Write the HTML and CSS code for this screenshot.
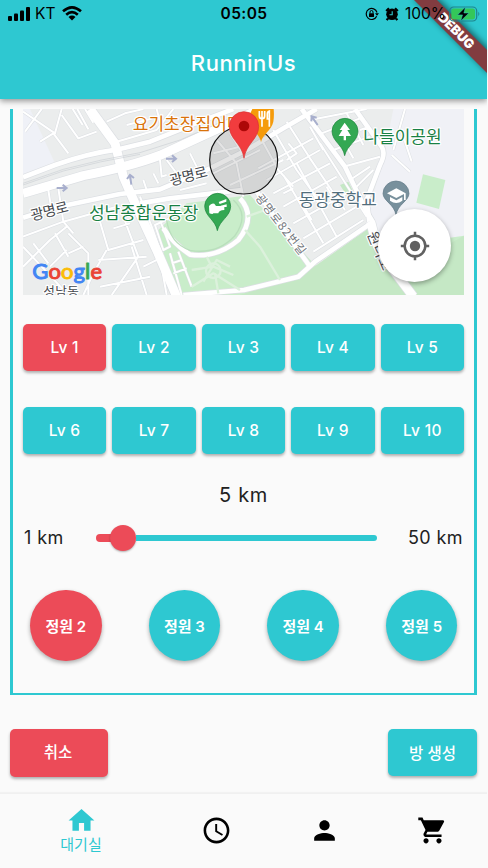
FILE: index.html
```html
<!DOCTYPE html>
<html lang="ko">
<head>
<meta charset="utf-8">
<title>RunninUs</title>
<link rel="stylesheet" href="styles.css">
</head>
<body>
<div class="app">
  <header class="appbar">
    <svg class="debug" viewBox="0 0 88 88">
      <defs><filter id="soft" x="-30%" y="-30%" width="160%" height="160%"><feGaussianBlur stdDeviation="3"/></filter></defs>
      <path d="M13-2L90 75V50L38-2z" opacity=".5" filter="url(#soft)"/>
      <path d="M12-2L90 76V53L35-2z" fill="#823c40"/>
      <text x="56.500" y="35.500" transform="rotate(45 56.500 30.700)" text-anchor="middle" textLength="45">DEBUG</text>
    </svg>
    <div class="status">
      <div class="status-left">
        <svg class="signal" viewBox="0 0 22 14"><rect x="0" y="9" width="4" height="5" rx="1"/><rect x="6" y="6.500" width="4" height="7.500" rx="1"/><rect x="12" y="3.500" width="4" height="10.500" rx="1"/><rect x="18" y="0" width="4" height="14" rx="1"/></svg>
        <span class="carrier">KT</span>
        <svg class="wifi" viewBox="0 0 20 15"><g fill="none" stroke="#000" stroke-width="2.600"><path d="M1 5.300Q10-2.600 19 5.300"/><path d="M4.200 8.700Q10 3.500 15.800 8.700"/></g><path d="M6.500 10.900Q10 8 13.500 10.900L10 14.500z"/></svg>
      </div>
      <span class="time">05:05</span>
      <div class="status-right">
        <svg class="lock" viewBox="0 0 14 14"><path d="M11.700 9.300A5.500 5.500 0 1 1 12 5.500" fill="none" stroke="#000" stroke-width="1.200"/><path d="M10 6.200h4l-2 2.600z"/><rect x="4" y="6.200" width="5" height="3.700" rx=".5"/><path d="M5 6.500V5a1.500 1.500 0 0 1 3 0v1.500" fill="none" stroke="#000"/></svg>
        <svg class="alarm" viewBox="0 0 14 14"><circle cx="7" cy="7.300" r="5.800"/><path d="M1.200 4L4 1.200M12.800 4L10 1.200M3 11.500l-1.300 1.700M11 11.500l1.300 1.700" stroke="#000" stroke-width="2.200"/><path d="M7.200 4.200v3.500H4.500" fill="none" stroke="#2ec8d1" stroke-width="1.100"/></svg>
        <span class="percent">100%</span>
        <svg class="battery" viewBox="0 0 31 16"><rect x=".7" y="1" width="27" height="14" rx="4" fill="none" stroke="#1f858b" stroke-width="1.200"/><rect x="2.300" y="2.600" width="23.800" height="10.800" rx="2.600" fill="#34c759"/><path d="M29.300 5.800q2 2.200 0 4.400z" fill="#1f858b"/><path d="M16.500 1L8.500 8.900h5L11.700 15 19.900 7h-5z" stroke="#2ec8d1" stroke-width=".5"/></svg>
      </div>
    </div>
    <h1 class="title">RunninUs</h1>
  </header>

  <main class="content">
    <section class="panel">
      <div class="map">
        <svg class="map-art" viewBox="69 27 1323 558" preserveAspectRatio="none">
          <defs>
            <g id="minor">
              <path d="M69 35L165 100L185 27M75 95L125 27M185 45L235 115L290 95M218 27L248 75M232 27L265 88M255 27L280 68M120 125L160 100L205 160M320 65L375 40L430 27M350 125L470 90L520 27M380 75L460 55M470 27L485 85"/>
              <path d="M69 410L190 365L350 320M145 270L155 335M175 265L190 365L220 400M69 500L150 420L200 380M69 440L130 505L200 580M100 430L145 490M165 400L205 470M205 400L265 460L265 585M200 450L150 500M300 365L325 450L430 420M320 450L280 520L250 585M370 350L415 470L335 585M295 480L440 470M300 560L450 530M395 440L440 585M340 385L390 370M205 460L250 440M430 500L480 475L500 585"/>
              <path d="M420 290L455 380L490 480M480 360L510 440L490 450L465 375L520 350M510 460L545 585M535 455L575 560M515 490L545 480M520 520L560 505M430 240L440 270M460 220L475 250M480 180L485 230L500 225M500 180L530 220M570 160L600 220M540 270L620 250"/>
              <path d="M650 120L710 190L730 290M690 100L735 170M640 160L720 140M640 220L780 150M690 255L850 180M780 110L835 210L880 260M820 90L890 210L970 320M860 65L930 175L1035 330M775 205L940 115M800 240L960 150M820 280L990 190M850 320L1010 230M880 370L1040 280M910 415L1070 320M940 455L1090 360M850 225L970 430M890 190L1010 410M960 130L1100 350M865 130L890 160L860 180M930 80L970 150M850 280L880 265M900 300L935 360M980 260L1015 320"/>
              <path d="M930 60L1100 27M965 100L1080 55M1000 150L1110 110M1030 200L1140 170M1070 260L1120 210M1000 70L1060 175M1040 40L1090 135M1080 90L1110 80M1180 150L1215 27M1050 240L1110 200M1175 165L1230 215M1205 95L1235 185"/>
            </g>
            <g id="medium">
              <path d="M69 232L165 195Q265 160 350 149L450 125L600 65L700 27"/>
              <path d="M69 353L170 322L360 282L480 268L630 205L740 150L850 85L950 27"/>
              <path d="M420 310L510 295L640 280L725 270"/>
              <path d="M770 275L930 500"/>
              <path d="M905 27L945 80L1035 200L1100 335L1118 365"/>
              <path d="M1065 27L1145 140Q1158 160 1140 195L1100 300L1108 365"/>
              <path d="M1120 365L945 485L895 530L732 570L550 585"/>
              <path d="M490 385Q520 430 570 464Q650 475 715 420Q770 350 720 295"/>
            </g>
            <g id="major">
              <path d="M69 280L250 227Q390 200 480 166L700 65L780 27"/>
              <path d="M270 27L345 130L370 230L405 310L470 450L530 590"/>
              <path d="M1112 365L1127 425L1150 470L1240 590"/>
            </g>
          </defs>
          <rect x="69" y="27" width="1323" height="558" fill="#ebeded"/>
          <path d="M69 27H90L165 190L69 230z" fill="#eff1f7"/>
          <path d="M1180 27H1392V430L1240 500L1110 390V320L1155 155z" fill="#f0f1f6"/>
          <path d="M475 390L560 310L750 285L950 500L1120 375L1160 440L1392 407V585H520z" fill="#c9edca"/>
          <path d="M900 530L1120 375L1210 510L1392 407V585H720z" fill="#c5e8c5"/>
          <path d="M1269 223L1336 240L1317 327L1249 308z" fill="#c9edca"/>
          <path d="M1020 255l25-10 15 30-20 12z" fill="#c5e8c5"/>
          <g fill="none" stroke-linejoin="round">
            <g stroke="#dcdfe3"><use href="#minor" stroke-width="9"/><use href="#medium" stroke-width="18"/><use href="#major" stroke-width="31"/></g>
            <g stroke="#fff"><use href="#minor" stroke-width="6"/><use href="#medium" stroke-width="14"/><use href="#major" stroke-width="27"/></g>
            <path d="M69 250L190 208Q300 178 420 158L540 120L690 55M69 255L190 213Q300 183 420 163" stroke="#ccd0d4" stroke-width="2"/>
            <path d="M500 360Q510 430 570 451Q650 465 704 408Q750 345 700 300" stroke="#b9dfbc" stroke-width="4"/>
            <path d="M575 510L640 500L700 525M575 560L640 520L720 570M620 470L635 500M735 390L780 440L840 540M740 350L795 330M610 545L650 480L690 500M645 520l10 60" stroke="#dcf1dc" stroke-width="7"/>
            <circle cx="640" cy="512" r="22" stroke="#dcf1dc" stroke-width="7"/>
          </g>
          <g fill="none" stroke="#a8afcd" stroke-width="6"><path d="M170 264h28M188 254l12 10-12 10M498 176h28M516 166l12 10-12 10M394 254l-4-28M381 237l9-12 12 9M953 75l-16-23M934 64l1-15 15 4"/></g>
          <g class="road-name">
            <text x="96" y="362" textLength="115" transform="rotate(-14 96 362)">광명로</text>
            <text x="513" y="257" textLength="115" transform="rotate(-14 513 257)">광명로</text>
            <text class="street" x="765" y="294" textLength="220" transform="rotate(52 765 294)">광명로82번길</text>
            <text class="side" x="1101" y="402" textLength="122" transform="rotate(67 1101 402)">원터로</text>
            <text class="district" x="130" y="589" textLength="107">성남동</text>
          </g>
          <text class="poi food" x="398" y="90" textLength="330">요기초장집어마</text>
          <text class="poi green" x="267" y="357" textLength="328">성남종합운동장</text>
          <text class="poi green" x="1090" y="130" textLength="235">나들이공원</text>
          <text class="poi school" x="896" y="319" textLength="235">동광중학교</text>
          <g fill="#34a853" stroke="#188038" stroke-width="2">
            <path id="poi-pin" d="M652 392C647 360 615 350 614 319A38 38 0 0 1 692 319C691 350 659 360 652 392z"/>
            <use href="#poi-pin" x="382" y="-225"/>
          </g>
          <path d="M627 318q7-10 16-7l5 7h25v12q-17 1-18 10h-15q-1 4-12 0zM656 306l23-9v8l-20 7zM662 317l18-4v8h-18z" fill="#fff"/>
          <path d="M1034 68l-15 22h8l-11 18h15v13h7v-13h15l-11-18h8z" fill="#fff"/>
          <path d="M1188 345C1183 313 1150 303 1149 281A39 38 0 0 1 1227 281C1226 303 1193 313 1188 345z" fill="#78909c" stroke="#607986" stroke-width="2"/>
          <path d="M1161 280l28-15 28 15v20h-5v-18l-23 12zM1170 291l19 10 18-10v11q-18 14-37 0z" fill="#fff"/>
          <circle cx="731" cy="180" r="102" fill="#777" fill-opacity=".2" stroke="#111" stroke-width="3.500"/>
          <path d="M783 127C780 103 749 85 749 61Q747 42 757 27H821Q823 45 820 65C815 91 787 103 783 127z" fill="#f59b0b"/>
          <path d="M778 33v15q0 8 8 8v24M794 33v15q0 8-8 8M786 33v20M808 80V57h-6V42q0-8 6-9v47" fill="none" stroke="#fff" stroke-width="5"/>
          <path d="M732 175C726 130 688 118 688 79A44 44 0 0 1 776 79C776 118 738 130 732 175z" fill="#f13c3e" stroke="#d93433" stroke-width="2"/>
          <circle cx="732" cy="78" r="16" fill="#ad0808"/>
          <text class="google" x="97" y="538" textLength="209"><tspan class="g-blue">G</tspan><tspan class="g-red">o</tspan><tspan class="g-yellow">o</tspan><tspan class="g-blue">g</tspan><tspan class="g-green">l</tspan><tspan class="g-red">e</tspan></text>
        </svg>
        <button class="locate" aria-label="내 위치"><svg viewBox="0 0 30 30"><circle cx="15" cy="15" r="5.200" fill="#616161"/><g fill="none" stroke="#616161" stroke-width="2.500"><circle cx="15" cy="15" r="10.300"/><path d="M15 .8v4.500M15 24.700v4.500M.8 15h4.500M24.700 15h4.500"/></g></svg></button>
      </div>

      <div class="levels">
        <button class="btn selected">Lv 1</button><button class="btn">Lv 2</button><button class="btn">Lv 3</button><button class="btn">Lv 4</button><button class="btn">Lv 5</button>
        <button class="btn">Lv 6</button><button class="btn">Lv 7</button><button class="btn">Lv 8</button><button class="btn">Lv 9</button><button class="btn">Lv 10</button>
      </div>

      <div class="distance">5 km</div>
      <div class="range">
        <span>1 km</span>
        <div class="slider"><div class="filled"></div><div class="thumb"></div><div class="rest"></div></div>
        <span>50 km</span>
      </div>

      <div class="capacity">
        <button class="round selected">정원 2</button><button class="round">정원 3</button><button class="round">정원 4</button><button class="round">정원 5</button>
      </div>
    </section>

    <div class="actions">
      <button class="btn cancel selected">취소</button>
      <button class="btn create">방 생성</button>
    </div>
  </main>

  <nav class="nav">
    <a class="tab active"><svg viewBox="0 0 24 24"><path d="M10 20v-6h4v6h5v-8h3L12 3 2 12h3v8z"/></svg><span>대기실</span></a>
    <a class="tab"><svg viewBox="0 0 24 24"><path d="M11.990 2C6.470 2 2 6.480 2 12s4.470 10 9.990 10C17.520 22 22 17.520 22 12S17.520 2 11.990 2zM12 20c-4.420 0-8-3.580-8-8s3.580-8 8-8 8 3.580 8 8-3.580 8-8 8zm.5-13H11v6l5.250 3.150.75-1.230-4.500-2.670z"/></svg></a>
    <a class="tab"><svg viewBox="0 0 24 24"><path d="M12 12c2.210 0 4-1.790 4-4s-1.790-4-4-4-4 1.790-4 4 1.790 4 4 4zm0 2c-2.670 0-8 1.340-8 4v2h16v-2c0-2.660-5.330-4-8-4z"/></svg></a>
    <a class="tab"><svg viewBox="0 0 24 24"><path d="M7 18c-1.100 0-1.990.9-1.990 2S5.900 22 7 22s2-.9 2-2-.9-2-2-2zM1 2v2h2l3.600 7.590-1.350 2.450c-.16.280-.25.610-.25.960 0 1.100.9 2 2 2h12v-2H7.420c-.14 0-.25-.11-.25-.25l.03-.12.900-1.630h7.450c.75 0 1.410-.41 1.750-1.030l3.580-6.490c.08-.14.120-.31.120-.48 0-.55-.45-1-1-1H5.210l-.94-2H1zm16 16c-1.100 0-1.990.9-1.990 2s.89 2 1.990 2 2-.9 2-2-.9-2-2-2z"/></svg></a>
  </nav>
</div>
</body>
</html>
```
FILE: styles.css
```css
* { box-sizing: border-box; }
body { margin: 0; background: #fafafa; overflow: hidden; }
button { border: 0; padding: 0; font: inherit; color: inherit; }
.app {
  display: flex;
  flex-direction: column;
  width: 487px;
  height: 867px;
  overflow: hidden;
  background: #fafafa;
  color: #212121;
  font-family: Inter, "Noto Sans CJK KR", sans-serif;
}
.appbar {
  position: relative;
  z-index: 1;
  flex: none;
  height: 99px;
  background: #2ec8d1;
  box-shadow: 0 2px 6px rgba(0, 0, 0, .42);
}
.status {
  position: relative;
  display: grid;
  grid-template-columns: 1fr auto 1fr;
  align-items: center;
  height: 27px;
  padding: 0 7px 0 8px;
  color: #000;
}
.status-left, .status-right { display: flex; align-items: center; }
.status-right { justify-content: flex-end; }
.signal { width: 22px; height: 14px; }
.carrier { margin-left: 5px; font-size: 15.500px; }
.wifi { width: 20px; height: 15px; margin-left: 7px; }
.time { font-size: 15.500px; font-weight: 600; letter-spacing: .4px; }
.lock { width: 14px; height: 14px; }
.alarm { width: 14px; height: 14px; margin-left: 6px; }
.percent { width: 40px; margin-left: 6px; font-size: 15.500px; }
.battery { width: 31px; height: 16px; margin-left: 4px; }
.title {
  margin: 21px 0 0;
  text-align: center;
  color: #fff;
  font-size: 22px;
  font-weight: 500;
  line-height: 30px;
  letter-spacing: .55px;
}
.debug { position: absolute; top: 0; right: -1px; width: 88px; height: 88px; }
.debug text { fill: #fff; font-size: 13px; font-weight: 900; }

.content { flex: 1; padding: 10px 10px 0; }
.panel {
  height: 586px;
  padding: 0 10px;
  border: solid #2ec8d1;
  border-width: 0 3px 2.500px;
}
.map { position: relative; height: 186px; overflow: hidden; }
.map-art { display: block; width: 441px; height: 186px; }
.map-art text { font-family: "Noto Sans CJK KR", sans-serif; stroke: #fff; stroke-width: 7px; stroke-linejoin: round; paint-order: stroke; }
.map-art .road-name text { fill: #45484d; font-size: 43px; }
.map-art .road-name .street { fill: #73777c; font-size: 35px; }
.map-art .road-name .side { font-size: 43px; }
.map-art .road-name .district { font-size: 38px; }
.map-art .poi { font-size: 51px; }
.map-art .food { fill: #d9730a; }
.map-art .green { fill: #188044; }
.map-art .school { fill: #526e7c; }
.map-art .google { font-family: Lato, sans-serif; font-size: 66px; font-weight: 400; stroke-width: 3px; }
.g-blue { fill: #4285f4; stroke: #4285f4; }
.g-red { fill: #ea4335; stroke: #ea4335; }
.g-yellow { fill: #fbbc05; stroke: #fbbc05; }
.g-green { fill: #34a853; stroke: #34a853; }
.locate {
  position: absolute;
  right: 13px;
  bottom: 13px;
  display: grid;
  place-items: center;
  width: 73px;
  height: 73px;
  border-radius: 50%;
  background: #fff;
  box-shadow: 0 2px 5px rgba(0, 0, 0, .35);
}
.locate svg { width: 30px; height: 30px; }

.levels {
  display: grid;
  grid-template-columns: repeat(5, 1fr);
  gap: 36.300px 6.300px;
  margin-top: 28.700px;
}
.btn {
  height: 47px;
  border-radius: 5px;
  background: #2ec8d1;
  color: #fff;
  font-size: 15.500px;
  font-weight: 500;
  letter-spacing: .3px;
  box-shadow: 0 2px 3px rgba(0, 0, 0, .3);
}
.btn.selected, .round.selected { background: #ec4b58; }
.distance { margin-top: 26px; text-align: center; font-size: 20px; line-height: 30px; letter-spacing: .65px; }
.range {
  display: flex;
  align-items: center;
  justify-content: space-between;
  height: 28px;
  margin-top: 14px;
  font-size: 18px;
  letter-spacing: .4px;
}
.range span:first-child { width: 73px; padding-left: 1px; }
.range span:last-child { width: 87px; padding-right: 1px; text-align: right; }
.slider { display: flex; flex: 1; align-items: center; }
.filled { width: 19px; height: 8px; margin-right: -5px; border-radius: 4px 0 0 4px; background: #ec4b58; }
.thumb { width: 26px; height: 26px; border-radius: 50%; background: #ec4b58; box-shadow: 0 1px 2px rgba(0, 0, 0, .3); }
.rest { flex: 1; height: 5.500px; border-radius: 0 3px 3px 0; background: #2ec8d1; }
.capacity { display: flex; justify-content: space-between; margin-top: 38px; padding: 0 6.500px 0 7px; }
.round {
  width: 71.500px;
  height: 71.500px;
  border-radius: 50%;
  background: #2ec8d1;
  color: #fff;
  font-size: 15px;
  font-weight: 600;
  box-shadow: 0 2px 4px rgba(0, 0, 0, .32);
}
.actions { display: flex; align-items: center; justify-content: space-between; height: 48px; margin-top: 33.500px; }
.cancel { width: 98px; height: 48px; padding: 0 2px 4px 0; letter-spacing: 0; }
.create { width: 89px; padding-bottom: 2px; letter-spacing: 0; }

.nav {
  display: grid;
  grid-template-columns: 162px 108px 108px 109px;
  flex: none;
  height: 74px;
  border-top: 1px solid #f0f0f0;
  background: #fafafa;
  box-shadow: 0 -1px 1px rgba(0, 0, 0, .03);
}
.tab { display: flex; flex-direction: column; align-items: center; justify-content: center; }
.tab svg { width: 31px; height: 31px; }
.active { color: #2ec8d1; font-size: 15px; line-height: 20px; }
.active svg { margin-top: -1px; fill: #2ec8d1; }
.active span { margin-top: -1px; }
```
